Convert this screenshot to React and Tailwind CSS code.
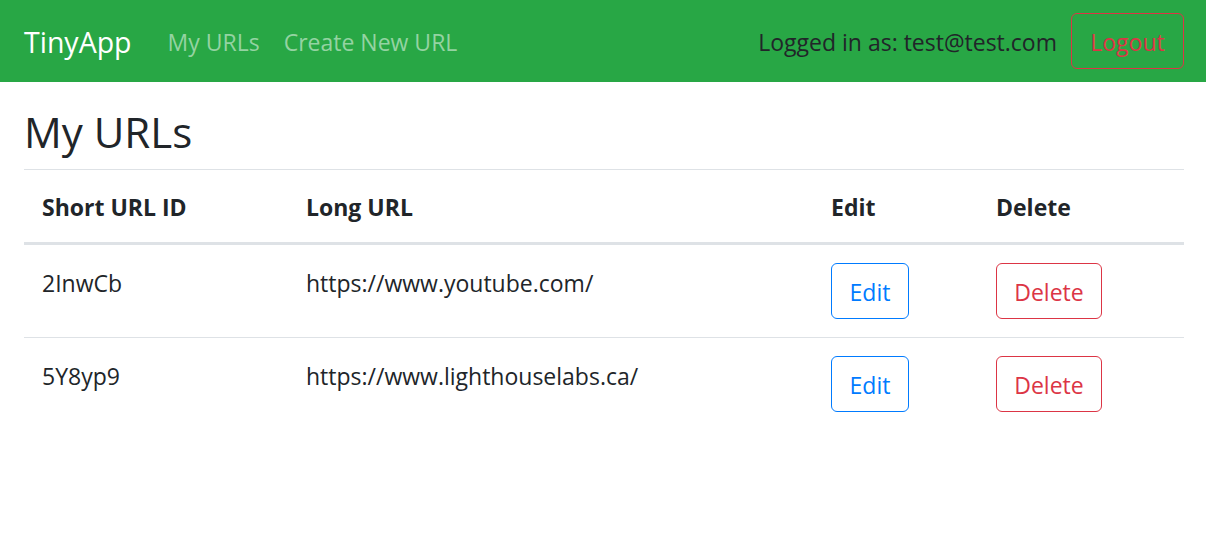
export default function App() {
  const rows = [
    { id: "2InwCb", url: "https://www.youtube.com/" },
    { id: "5Y8yp9", url: "https://www.lighthouselabs.ca/" },
  ];
  const th = "text-left font-bold border-t border-[#dee2e6] border-b-[3px] border-b-[#dee2e6] px-[18px] pt-[19px] pb-[17px] align-bottom";
  const td = "px-[18px] pt-[20px] pb-[16px] align-top";
  return (
    <div className="min-h-[560px] bg-white text-[#212529] text-[23px] leading-[36px]" style={{ fontFamily: '"Open Sans", "Noto Sans", sans-serif' }}>
      <nav className="h-[82px] bg-[#28a745] pl-[24px] pr-[22px] flex items-center">
        <span className="text-white text-[28.5px] leading-[45px] mr-[24px] pt-[2px]">TinyApp</span>
        <a className="px-[12px] text-[#94d3a2] pt-[2px]">My URLs</a>
        <a className="px-[12px] text-[#94d3a2] pt-[2px]">Create New URL</a>
        <div className="ml-auto flex items-center gap-[14px]">
          <span className="text-[#212529] pt-[2px]">Logged in as: test@test.com</span>
          <button className="h-[56px] w-[113px] border border-[#dc3545] rounded-[6px] text-[#dc3545] pt-[2px]">Logout</button>
        </div>
      </nav>
      <main className="pl-[24px] pr-[22px]">
        <h2 className="text-[42px] leading-[56px] font-medium pt-[22px] pb-[9px]">My URLs</h2>
        <table className="w-full table-fixed border-collapse">
          <colgroup>
            <col className="w-[264px]" />
            <col className="w-[525px]" />
            <col className="w-[165px]" />
            <col />
          </colgroup>
          <thead>
            <tr>
              <th className={th}>Short URL ID</th>
              <th className={th}>Long URL</th>
              <th className={th}>Edit</th>
              <th className={th}>Delete</th>
            </tr>
          </thead>
          <tbody>
            {rows.map((r, i) => (
              <tr key={r.id} className={i > 0 ? "border-t border-[#dee2e6]" : ""}>
                <td className={td}>{r.id}</td>
                <td className={td}>{r.url}</td>
                <td className="px-[18px] py-[18px] align-top">
                  <button className="h-[56px] w-[78px] border border-[#007bff] rounded-[6px] text-[#007bff] pt-[2px]">Edit</button>
                </td>
                <td className="px-[18px] py-[18px] align-top">
                  <button className="h-[56px] w-[106px] border border-[#dc3545] rounded-[6px] text-[#dc3545] pt-[2px]">Delete</button>
                </td>
              </tr>
            ))}
          </tbody>
        </table>
      </main>
    </div>
  );
}
